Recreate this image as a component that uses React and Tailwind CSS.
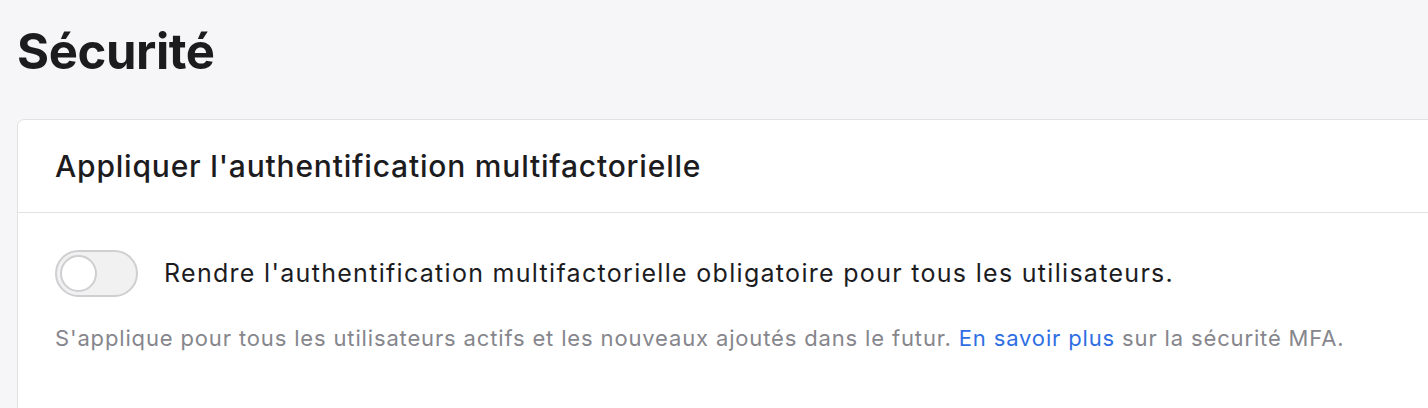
import React from 'react';

const App = () => {
  return (
    <div className="min-h-[408px] bg-[#f6f6f8] pl-[17px] pt-[22px] overflow-hidden" style={{ fontFamily: 'Inter, "Liberation Sans", sans-serif' }}>
      {/* Title */}
      <h1 className="text-[49px] leading-[60px] font-bold text-[#1c1c1f] tracking-[-0.4px]">Sécurité</h1>

      {/* Card */}
      <div className="mt-[37px] w-[1440px] bg-white border border-[#e2e2e4] rounded-[7px]">
        {/* Header */}
        <div className="h-[93px] flex items-center px-[37px] border-b border-[#e2e2e4]">
          <h2 className="text-[30px] font-medium text-[#1c1c1f] tracking-[0.8px]">Appliquer l'authentification multifactorielle</h2>
        </div>

        {/* Body */}
        <div className="px-[37px] pt-[37px] pb-[60px]">
          <div className="flex items-center gap-[26px]">
            <button className="relative w-[83px] h-[47px] rounded-full bg-[#f1f1f2] border-2 border-[#cfcfd2] shrink-0">
              <span className="absolute left-[3px] top-[3px] w-[37px] h-[37px] rounded-full bg-white border-2 border-[#cfcfd2]"></span>
            </button>
            <p className="text-[25px] text-[#1c1c1f] tracking-[1.3px]">Rendre l'authentification multifactorielle obligatoire pour tous les utilisateurs.</p>
          </div>
          <p className="mt-[26px] text-[22px] leading-[30px] text-[#86868c] tracking-[0.85px]">
            S'applique pour tous les utilisateurs actifs et les nouveaux ajoutés dans le futur.{' '}
            <a href="#" className="text-[#2f6fe4]">En savoir plus</a> sur la sécurité MFA.
          </p>
        </div>
      </div>
    </div>
  );
};

export default App;
